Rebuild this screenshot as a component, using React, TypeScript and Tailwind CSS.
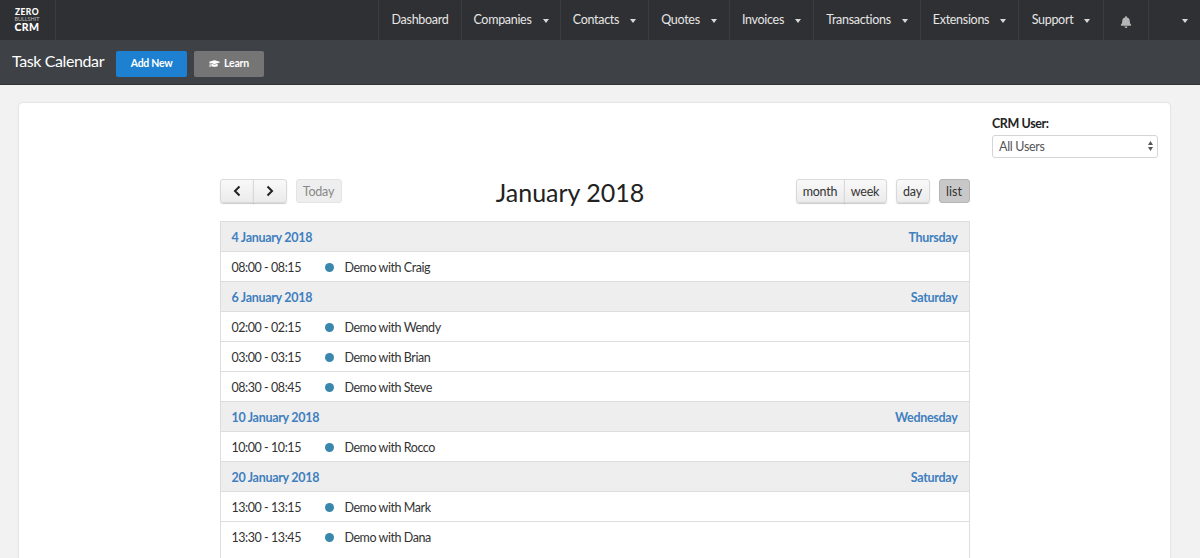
import React from "react";
import { FaBell, FaGraduationCap } from "react-icons/fa";

type Task = { time: string; title: string };
type Day = { date: string; weekday: string; tasks: Task[] };

const navItems = [
  { label: "Dashboard", width: "w-[83px]", caret: false },
  { label: "Companies", width: "w-[99px]", caret: true },
  { label: "Contacts", width: "w-[88px]", caret: true },
  { label: "Quotes", width: "w-[81px]", caret: true },
  { label: "Invoices", width: "w-[84px]", caret: true },
  { label: "Transactions", width: "w-[107px]", caret: true },
  { label: "Extensions", width: "w-[98px]", caret: true },
  { label: "Support", width: "w-[85px]", caret: true },
];

const days: Day[] = [
  { date: "4 January 2018", weekday: "Thursday", tasks: [{ time: "08:00 - 08:15", title: "Demo with Craig" }] },
  {
    date: "6 January 2018",
    weekday: "Saturday",
    tasks: [
      { time: "02:00 - 02:15", title: "Demo with Wendy" },
      { time: "03:00 - 03:15", title: "Demo with Brian" },
      { time: "08:30 - 08:45", title: "Demo with Steve" },
    ],
  },
  { date: "10 January 2018", weekday: "Wednesday", tasks: [{ time: "10:00 - 10:15", title: "Demo with Rocco" }] },
  {
    date: "20 January 2018",
    weekday: "Saturday",
    tasks: [
      { time: "13:00 - 13:15", title: "Demo with Mark" },
      { time: "13:30 - 13:45", title: "Demo with Dana" },
    ],
  },
];

const Caret = () => <span className="ml-[11px] mt-[1px] h-0 w-0 border-x-[3.5px] border-t-[4px] border-x-transparent border-t-[#d8d8d8]" />;

const toolButton =
  "flex h-[24px] items-center justify-center border border-[#d9d9d9] bg-linear-to-b from-[#f9f9f9] to-[#ebebeb] text-[12.5px] tracking-[-0.2px] text-[#333] shadow-[0_1px_1px_rgba(0,0,0,0.2)]";

const App: React.FC = () => {
  return (
    <div className="flex h-[558px] flex-col overflow-hidden bg-[#f2f2f2] font-['Lato',sans-serif]">
      {/* top nav */}
      <div className="flex h-[40px] shrink-0 bg-[#2f3033] text-[12.5px] tracking-[-0.3px] text-[#e6e6e6]">
        <div className="flex w-[56px] flex-col items-center justify-center border-r border-[#3c3d40] pr-[1px] text-white">
          <span className="text-[8.5px] font-black leading-[8px] tracking-[0.4px]">ZERO</span>
          <span className="text-[5.5px] leading-[7px] tracking-normal text-[#bdbdbd]">BULLSHIT</span>
          <span className="text-[10.5px] font-black leading-[9px] tracking-[0.4px]">CRM</span>
        </div>
        <div className="flex-1" />
        {navItems.map((item) => (
          <div key={item.label} className={`flex ${item.width} items-center justify-center border-l border-[#3c3d40]`}>
            <span>{item.label}</span>
            {item.caret && <Caret />}
          </div>
        ))}
        <div className="flex w-[45px] items-center justify-center border-l border-[#3c3d40] pt-[3px] text-[#b5b5b5]">
          <FaBell className="h-[12px] w-[12px]" />
        </div>
        <div className="flex w-[52px] items-center justify-end border-l border-[#3c3d40] pr-[12px]">
          <Caret />
        </div>
      </div>

      {/* page header */}
      <div className="flex h-[45px] shrink-0 items-center border-b border-[#2f3134] bg-[#3e4246] pl-[12px] pt-[3px]">
        <h1 className="mb-[6px] text-[16px] leading-none tracking-[-0.4px] text-white">Task Calendar</h1>
        <button className="ml-[12px] flex h-[26px] w-[71px] items-center justify-center rounded-[2px] bg-[#1e80d0] text-[10.5px] font-bold tracking-[-0.3px] text-white">
          Add New
        </button>
        <button className="ml-[7px] flex h-[26px] w-[70px] items-center justify-center gap-[4px] rounded-[2px] bg-[#757575] text-[10.5px] font-bold tracking-[-0.2px] text-white">
          <FaGraduationCap className="h-[11px] w-[11px]" />
          Learn
        </button>
      </div>

      {/* card, runs past the bottom of the window */}
      <div className="mr-[30px] ml-[19px] mt-[18px] h-[500px] shrink-0 rounded-[4px] bg-white pt-[13px] shadow-[0_0_2px_rgba(0,0,0,0.2)]">
        <div className="flex justify-end pr-[12px]">
          <div className="w-[166px]">
            <label className="block text-[12.5px] font-bold leading-[16px] tracking-[-0.4px] text-[#222]">CRM User:</label>
            <div className="relative mt-[3px]">
              <select className="block h-[23px] w-full appearance-none rounded-[3px] border border-[#d5d5d5] bg-white pl-[6px] pt-[2px] text-[12.5px] tracking-[-0.3px] text-[#555]">
                <option>All Users</option>
              </select>
              <svg className="pointer-events-none absolute right-[5px] top-[6px]" width="5" height="10" viewBox="0 0 5 10" fill="#555">
                <path d="M2.5 0L5 4H0z" />
                <path d="M2.5 10L5 6H0z" />
              </svg>
            </div>
          </div>
        </div>

        <div className="mx-auto mt-[21px] w-[750px]">
          {/* toolbar */}
          <div className="flex h-[24px] items-center">
            <div className="flex">
              <button className={`${toolButton} w-[34px] rounded-l-[3px]`}>
                <svg width="8" height="12" viewBox="0 0 8 12" fill="none" stroke="#222" strokeWidth="2"><path d="M6.5 1.500L2 6l4.500 4.500" /></svg>
              </button>
              <button className={`${toolButton} -ml-px w-[34px] rounded-r-[3px]`}>
                <svg width="8" height="12" viewBox="0 0 8 12" fill="none" stroke="#222" strokeWidth="2"><path d="M1.500 1.500L6 6l-4.500 4.500" /></svg>
              </button>
            </div>
            <button className="ml-[9px] flex h-[24px] w-[46px] items-center justify-center rounded-[3px] border border-[#e4e4e4] bg-[#eeeeee] pt-[2px] text-[12.5px] tracking-[-0.2px] text-[#888]">
              Today
            </button>
            <h2 className="flex-1 pl-[3px] pt-[2px] text-center text-[25px] leading-none text-[#222]">January 2018</h2>
            <div className="flex">
              <button className={`${toolButton} w-[49px] rounded-l-[3px] pt-[2px]`}>month</button>
              <button className={`${toolButton} -ml-px w-[43px] rounded-r-[3px] pt-[2px]`}>week</button>
            </div>
            <button className={`${toolButton} ml-[9px] w-[34px] rounded-[3px] pt-[2px]`}>day</button>
            <button className="ml-[9px] flex h-[24px] w-[31px] items-center justify-center rounded-[3px] border border-[#b5b5b5] bg-[#c8c8c8] pt-[2px] text-[12.5px] text-[#333]">
              list
            </button>
          </div>

          {/* list */}
          <div className="mt-[18px] h-[345px] border-x border-[#ddd]">
            {days.map((day) => (
              <div key={day.date}>
                <div className="flex h-[30px] items-center justify-between border-t border-[#ddd] bg-[#eeeeee] px-[11px] pt-[3px] text-[12.5px] font-bold tracking-[-0.3px] text-[#3f7fbf]">
                  <span>{day.date}</span>
                  <span>{day.weekday}</span>
                </div>
                {day.tasks.map((task) => (
                  <div key={task.time} className="flex h-[30px] items-center border-t border-[#ddd] pl-[11px] pt-[3px] text-[12.5px] tracking-[-0.45px] text-[#333]">
                    <span className="w-[93px]">{task.time}</span>
                    <span className="mt-[-2px] h-[9px] w-[9px] rounded-full bg-[#3a87ad]" />
                    <span className="ml-[11px]">{task.title}</span>
                  </div>
                ))}
              </div>
            ))}
          </div>
        </div>
      </div>
    </div>
  );
};

export default App;
